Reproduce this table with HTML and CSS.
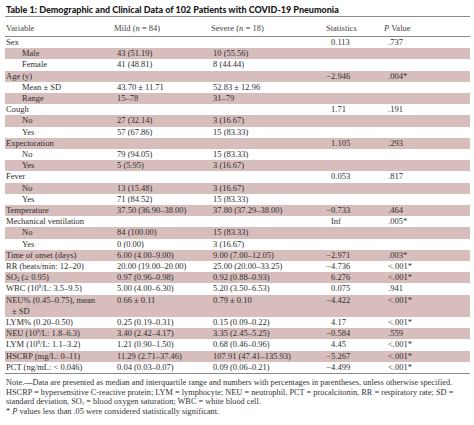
FILE: index.html
```html
<!DOCTYPE html>
<html lang="en">
<head>
<meta charset="utf-8">
<title>Table 1</title>
<link rel="stylesheet" href="styles.css">
</head>
<body>
<div class="page">
  <h1 class="title">Table 1: Demographic and Clinical Data of 102 Patients with COVID-19 Pneumonia</h1>
  <table class="data">
    <colgroup>
      <col class="c1"><col class="c2"><col class="c3"><col class="c4"><col class="c5">
    </colgroup>
    <thead>
      <tr>
        <th>Variable</th>
        <th>Mild (<i>n</i> = 84)</th>
        <th>Severe (<i>n</i> = 18)</th>
        <th>Statistics</th>
        <th><i>P</i> Value</th>
      </tr>
    </thead>
    <tbody>
      <tr><td>Sex</td><td></td><td></td><td>0.113</td><td>.737</td></tr>
      <tr class="sh"><td class="sub">Male</td><td>43 (51.19)</td><td>10 (55.56)</td><td></td><td></td></tr>
      <tr><td class="sub">Female</td><td>41 (48.81)</td><td>8 (44.44)</td><td></td><td></td></tr>
      <tr class="sh"><td>Age (y)</td><td></td><td></td><td><span class="neg">−</span>2.946</td><td>.004*</td></tr>
      <tr><td class="sub">Mean ± SD</td><td>43.70 ± 11.71</td><td>52.83 ± 12.96</td><td></td><td></td></tr>
      <tr class="sh"><td class="sub">Range</td><td>15–78</td><td>31–79</td><td></td><td></td></tr>
      <tr><td>Cough</td><td></td><td></td><td>1.71</td><td>.191</td></tr>
      <tr class="sh"><td class="sub">No</td><td>27 (32.14)</td><td>3 (16.67)</td><td></td><td></td></tr>
      <tr><td class="sub">Yes</td><td>57 (67.86)</td><td>15 (83.33)</td><td></td><td></td></tr>
      <tr class="sh"><td>Expectoration</td><td></td><td></td><td>1.105</td><td>.293</td></tr>
      <tr><td class="sub">No</td><td>79 (94.05)</td><td>15 (83.33)</td><td></td><td></td></tr>
      <tr class="sh"><td class="sub">Yes</td><td>5 (5.95)</td><td>3 (16.67)</td><td></td><td></td></tr>
      <tr><td>Fever</td><td></td><td></td><td>0.053</td><td>.817</td></tr>
      <tr class="sh"><td class="sub">No</td><td>13 (15.48)</td><td>3 (16.67)</td><td></td><td></td></tr>
      <tr><td class="sub">Yes</td><td>71 (84.52)</td><td>15 (83.33)</td><td></td><td></td></tr>
      <tr class="sh"><td>Temperature</td><td>37.50 (36.90–38.00)</td><td>37.80 (37.29–38.00)</td><td><span class="neg">−</span>0.733</td><td>.464</td></tr>
      <tr><td>Mechanical ventilation</td><td></td><td></td><td>Inf</td><td>.005*</td></tr>
      <tr class="sh"><td class="sub">No</td><td>84 (100.00)</td><td>15 (83.33)</td><td></td><td></td></tr>
      <tr><td class="sub">Yes</td><td>0 (0.00)</td><td>3 (16.67)</td><td></td><td></td></tr>
      <tr class="sh"><td>Time of onset (days)</td><td>6.00 (4.00–9.00)</td><td>9.00 (7.00–12.05)</td><td><span class="neg">−</span>2.971</td><td>.003*</td></tr>
      <tr><td>RR (beats/min: 12–20)</td><td>20.00 (19.00–20.00)</td><td>25.00 (20.00–33.25)</td><td><span class="neg">−</span>4.736</td><td>&lt;.001*</td></tr>
      <tr class="sh"><td>SO<sub>2</sub> (≥ 0.95)</td><td>0.97 (0.96–0.98)</td><td>0.92 (0.88–0.93)</td><td>6.276</td><td>&lt;.001*</td></tr>
      <tr><td>WBC (10<sup>9</sup>/L: 3.5–9.5)</td><td>5.00 (4.00–6.30)</td><td>5.20 (3.50–6.53)</td><td>0.075</td><td>.941</td></tr>
      <tr class="sh"><td>NEU% (0.45–0.75), mean<br><span class="hang">± SD</span></td><td>0.66 ± 0.11</td><td>0.79 ± 0.10</td><td><span class="neg">−</span>4.422</td><td>&lt;.001*</td></tr>
      <tr><td>LYM% (0.20–0.50)</td><td>0.25 (0.19–0.31)</td><td>0.15 (0.09–0.22)</td><td>4.17</td><td>&lt;.001*</td></tr>
      <tr class="sh"><td>NEU (10<sup>9</sup>/L: 1.8–6.3)</td><td>3.40 (2.42–4.17)</td><td>3.35 (2.45–5.25)</td><td><span class="neg">−</span>0.584</td><td>.559</td></tr>
      <tr><td>LYM (10<sup>9</sup>/L: 1.1–3.2)</td><td>1.21 (0.90–1.50)</td><td>0.68 (0.46–0.96)</td><td>4.45</td><td>&lt;.001*</td></tr>
      <tr class="sh"><td>HSCRP (mg/L: 0–11)</td><td>11.29 (2.71–37.46)</td><td>107.91 (47.41–135.93)</td><td><span class="neg">−</span>5.267</td><td>&lt;.001*</td></tr>
      <tr><td>PCT (ng/mL: &lt; 0.046)</td><td>0.04 (0.03–0.07)</td><td>0.09 (0.06–0.21)</td><td><span class="neg">−</span>4.499</td><td>&lt;.001*</td></tr>
    </tbody>
  </table>
  <p class="note">Note.—Data are presented as median and interquartile range and numbers with percentages in parentheses, unless otherwise specified.<br>HSCRP = hypersensitive C-reactive protein; LYM = lymphocyte; NEU = neutrophil, PCT = procalcitonin, RR = respiratory rate; SD =<br>standard deviation, SO<sub>2</sub> = blood oxygen saturation; WBC = white blood cell.<br>* <i>P</i> values less than .05 were considered statistically significant.</p>
</div>
</body>
</html>
```

FILE: styles.css
```css
html, body {
  margin: 0;
  padding: 0;
  background: #ffffff;
}

.page {
  width: 465px;
  padding-left: 5px;
  color: #2e2e2e;
  font-family: "Liberation Serif", "Times New Roman", serif;
}

.title {
  margin: 0;
  padding: 3px 0 0 1px;
  height: 13px;
  line-height: 13px;
  font-family: "Lato", "DejaVu Sans", sans-serif;
  font-weight: 900;
  font-size: 9px;
  color: #1a1a1a;
  white-space: nowrap;
  border-bottom: 1px solid #8a8a8a;
}

.data {
  width: 465px;
  table-layout: fixed;
  border-collapse: collapse;
  font-size: 8.5px;
  margin-top: 1px;
}

.c1 { width: 109px; }
.c2 { width: 97px; }
.c3 { width: 115px; }
.c4 { width: 58px; }
.c5 { width: 86px; }

.data th {
  font-weight: normal;
  text-align: left;
  padding: 5px 0 2px 0;
  line-height: 11px;
  color: #444;
  border-bottom: 1px solid #8a8a8a;
  white-space: nowrap;
}

.data th:first-child { padding-left: 1px; }

.data td {
  padding: 0;
  line-height: 11.2px;
  vertical-align: top;
  white-space: nowrap;
}

.data td:nth-child(1) { padding-left: 1px; }
.data td:nth-child(2) { padding-left: 3px; }
.data td:nth-child(3) { padding-left: 2px; }
.data td:nth-child(4) { padding-left: 5px; }
.data td:nth-child(5) { padding-left: 4px; }

.data td.sub { padding-left: 17px; }

.data tbody tr:last-child td {
  border-bottom: 1px solid #8a8a8a;
}

.sh td { background: #d7bdbc; }

.neg {
  display: inline-block;
  width: 0.564em;
  margin-left: -0.564em;
}

.hang { padding-left: 6px; }

sub, sup {
  font-size: 0.6em;
  line-height: 0;
}
sub { vertical-align: -0.25em; }
sup { vertical-align: 0.55em; }

.note {
  margin: 0;
  padding: 4px 0 0 1px;
  font-size: 8.3px;
  line-height: 9.6px;
  color: #333;
  white-space: nowrap;
}
```
